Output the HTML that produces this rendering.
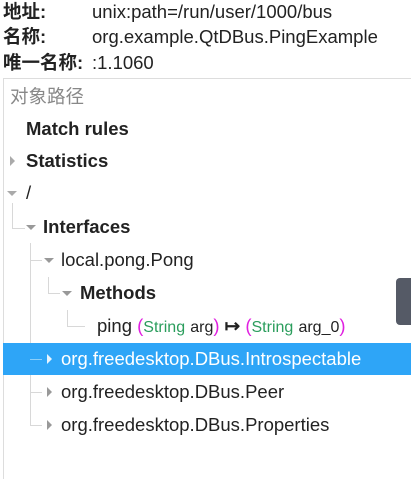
<!DOCTYPE html>
<html><head><meta charset="utf-8"><style>
body{margin:0;width:411px;height:465px;overflow:hidden;background:#fff;font-family:"Liberation Sans","Noto Sans CJK SC",sans-serif;color:#222;position:relative}
.t{position:absolute;white-space:nowrap;font-size:18.5px;line-height:22px}
.b{font-weight:bold}
.l{position:absolute;background:#d8d8d8}
.ad{position:absolute;width:0;height:0;border-left:5px solid transparent;border-right:5px solid transparent;border-top:5px solid #999}
.ar{position:absolute;width:0;height:0;border-top:5px solid transparent;border-bottom:5px solid transparent;border-left:5px solid #999}
.g{color:#2a9d5c}.p{color:#e020e0}
.s{font-size:16px}
</style></head><body>
<div class="t b" style="left:3px;top:1px">地址:</div>
<div class="t" style="left:92px;top:1px">unix:path=/run/user/1000/bus</div>
<div class="t b" style="left:3px;top:26px">名称:</div>
<div class="t" style="left:92px;top:26px">org.example.QtDBus.PingExample</div>
<div class="t b" style="left:3px;top:52px">唯一名称:</div>
<div class="t" style="left:92px;top:52px">:1.1060</div>
<div style="position:absolute;left:3px;top:78px;width:420px;height:400px;border-left:1px solid #ddd;border-top:1px solid #ddd"></div>
<div class="t" style="left:10px;top:86px;color:#888">对象路径</div>
<div class="t b" style="left:26px;top:118px">Match rules</div>
<div class="ar" style="left:10px;top:156px;border-left-color:#aaa"></div>
<div class="t b" style="left:26px;top:150px">Statistics</div>
<div class="ad" style="left:7px;top:191px;border-top-color:#aaa"></div>
<div class="t" style="left:26px;top:182px">/</div>
<div class="l" style="left:12px;top:203px;width:1px;height:25px"></div>
<div class="l" style="left:12px;top:228px;width:13px;height:1px"></div>
<div class="ad" style="left:26px;top:225px"></div>
<div class="t b" style="left:43px;top:216px">Interfaces</div>
<div class="l" style="left:30px;top:243px;width:1px;height:183px"></div>
<div class="l" style="left:30px;top:260px;width:12px;height:1px"></div>
<div class="ad" style="left:44px;top:258px"></div>
<div class="t" style="left:61px;top:249px">local.pong.Pong</div>
<div class="l" style="left:48px;top:277px;width:1px;height:16px"></div>
<div class="l" style="left:48px;top:293px;width:12px;height:1px"></div>
<div class="ad" style="left:62px;top:291px"></div>
<div class="t b" style="left:80px;top:282px">Methods</div>
<div class="l" style="left:67px;top:310px;width:1px;height:16px"></div>
<div class="l" style="left:67px;top:326px;width:18px;height:1px"></div>
<div class="t" style="left:97px;top:315px">ping <span class="p">(</span><span class="g s">String</span> <span class="s">arg</span><span class="p">)</span> <b>↦</b> <span class="p">(</span><span class="g s">String</span> <span class="s">arg_0</span><span class="p">)</span></div>
<div style="position:absolute;left:3px;top:343px;width:408px;height:32px;background:#2ea5f7"></div>
<div class="l" style="left:30px;top:359px;width:12px;height:1px;background:#8ccff9"></div>
<div class="ar" style="left:47px;top:354px;border-left-color:#e8f4fe"></div>
<div class="t" style="left:61px;top:348px;color:#fff">org.freedesktop.DBus.Introspectable</div>
<div class="l" style="left:30px;top:392px;width:12px;height:1px"></div>
<div class="ar" style="left:47px;top:387px"></div>
<div class="t" style="left:61px;top:381px">org.freedesktop.DBus.Peer</div>
<div class="l" style="left:30px;top:425px;width:12px;height:1px"></div>
<div class="ar" style="left:47px;top:420px"></div>
<div class="t" style="left:61px;top:414px">org.freedesktop.DBus.Properties</div>
<div style="position:absolute;left:396px;top:278px;width:20px;height:47px;background:#555a66;border-radius:4px"></div>
</body></html>
